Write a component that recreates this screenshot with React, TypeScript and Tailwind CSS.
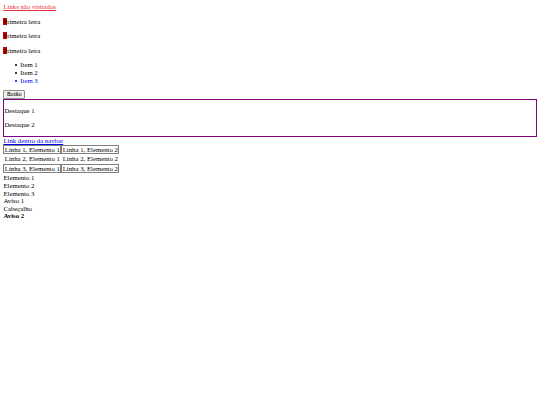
import React from 'react';

const rows = [
  { n: 1, boxed: true },
  { n: 2, boxed: false },
  { n: 3, boxed: true }
];

function Item({ children, className = '' }: { children: React.ReactNode; className?: string }) {
  return (
    <li className={`relative ${className}`}>
      <span className="absolute -left-[5.5px] top-[1.3px] w-[1.9px] h-[1.9px] mt-[1.7px] rounded-full bg-current" />
      {children}
    </li>
  );
}

export default function App() {
  return (
    <div className="p-[3.4px] text-[6.75px] leading-[7.76px] text-black bg-white min-h-[405px] font-['Liberation_Serif',serif]">
      <div>
        <a href="#" className="text-[#e8313c] underline decoration-[0.5px]">Links não visitados</a>
      </div>

      {[0, 1, 2].map((i) =>
        <p key={i} className="my-[6.75px] first-letter:bg-[#c00000] first-letter:text-[#400000]">
          Primeira letra
        </p>
      )}

      <ul className="list-none pl-[16.9px] my-[6.75px]">
        <Item>Item 1</Item>
        <Item>Item 2</Item>
        <Item className="text-[#0000ee]">Item 3</Item>
      </ul>

      <div className="flex -mt-[1.5px]">
        <button className="font-['Liberation_Sans',sans-serif] text-[5.6px] leading-[6.4px] px-[2.5px] py-[0.4px] bg-[#efefef] border border-[#8f8f8f] rounded-[1px] text-black">
          Botão
        </button>
      </div>

      <div className="border border-[#800080]">
        <p className="my-[6.75px]">Destaque 1</p>
        <p className="my-[6.75px]">Destaque 2</p>
      </div>

      <div>
        <a href="#" className="text-[#0000ee] underline decoration-[0.5px]">Link dentro da navbar</a>
      </div>

      <table className="border-separate border-spacing-[0.85px]">
        <tbody>
          {rows.map((r) =>
            <tr key={r.n}>
              <td className={`px-[0.42px] py-0 leading-[7.4px] border ${r.boxed ? 'border-[#808080]' : 'border-transparent'}`}>
                Linha {r.n}, Elemento 1
              </td>
              <td className={`px-[0.42px] py-0 leading-[7.4px] border ${r.boxed ? 'border-[#808080]' : 'border-transparent'}`}>
                Linha {r.n}, Elemento 2
              </td>
            </tr>
          )}
        </tbody>
      </table>

      <div className="leading-[7.6px] mt-[1.5px]">
        <div>Elemento 1</div>
        <div>Elemento 2</div>
        <div>Elemento 3</div>
        <div>Aviso 1</div>
        <div>Cabeçalho</div>
        <div className="font-bold">Aviso 2</div>
      </div>
    </div>
  );
}
